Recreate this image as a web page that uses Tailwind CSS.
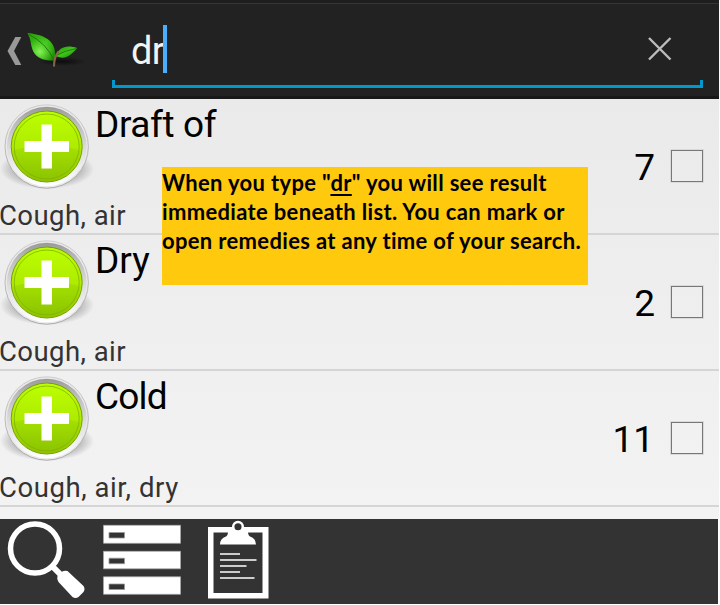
<!DOCTYPE html>
<html lang="en">
<head>
<meta charset="utf-8">
<title>Remedy search</title>
<script src="https://cdn.jsdelivr.net/npm/@tailwindcss/browser@4"></script>
</head>
<body class="bg-white w-[720px] h-[605px] overflow-hidden font-['Roboto',sans-serif]">
<svg class="absolute w-0 h-0">
  <defs>
    <linearGradient id="ring" x1="0" y1="0" x2="0" y2="1"><stop offset="0" stop-color="#999"/><stop offset=".2" stop-color="#bbb"/><stop offset=".55" stop-color="#dedede"/><stop offset="1" stop-color="#fff"/></linearGradient>
    <linearGradient id="rim" x1="0" y1="0" x2="0" y2="1"><stop offset="0" stop-color="#ccc"/><stop offset="1" stop-color="#aaa"/></linearGradient>
    <linearGradient id="lime" x1="0" y1="0" x2="0" y2="1"><stop offset="0" stop-color="#bcff00"/><stop offset=".5" stop-color="#aeec00"/><stop offset="1" stop-color="#8dc400"/></linearGradient>
    <radialGradient id="shade"><stop offset=".7" stop-color="#999" stop-opacity=".6"/><stop offset="1" stop-color="#999" stop-opacity="0"/></radialGradient>
    <linearGradient id="leaf" x1="0" y1="0" x2="1" y2="1"><stop offset="0" stop-color="#279b08"/><stop offset=".5" stop-color="#3fc51a"/><stop offset="1" stop-color="#188000"/></linearGradient>
    <radialGradient id="glow" cx=".45" cy=".68" r=".5"><stop offset="0" stop-color="#8bf25c"/><stop offset="1" stop-color="#55d52c" stop-opacity="0"/></radialGradient>
    <radialGradient id="dark"><stop offset="0" stop-color="#0c0c0c"/><stop offset="1" stop-color="#0c0c0c" stop-opacity="0"/></radialGradient>
  </defs>
  <symbol id="plus" viewBox="0 0 94 94">
    <ellipse cx="47" cy="70" rx="47" ry="20" fill="url(#shade)"/>
    <circle cx="46.700" cy="47.500" r="41.700" fill="#e9e9e9" stroke="url(#rim)" stroke-width="1"/>
    <circle cx="46.700" cy="47.500" r="39.800" fill="url(#ring)"/>
    <circle cx="46.700" cy="47.500" r="35.500" fill="url(#lime)" stroke="#76a000" stroke-width="1"/>
    <circle cx="46.700" cy="47.500" r="32.500" fill="none" stroke="#7fac00" stroke-width="1" opacity=".75"/>
    <path d="M12.500 52c10-4 20-5 34-5s25 1 34 5c-3 18-17 28-34 28s-31-10-34-28z" fill="#86b900" opacity=".22"/>
    <path d="M41.500 25.500h10.500v16.500h17v11h-17v16.500h-10.500v-16.500h-17v-11h17z" fill="#fff"/>
  </symbol>
</svg>

<div class="w-[719px] h-[604px] flex flex-col">
  <header class="h-[99px] bg-[#222] border-b-[3px] border-[#181818] flex flex-col">
    <div class="h-1 shrink-0 bg-[#1e1e1e] border-b border-[#353535]"></div>
    <div class="flex">
      <svg class="w-28 h-[84px]" viewBox="0 4 112 84">
        <path d="M15.300 37h6L14 51l7.300 14h-6L7.500 51z" fill="#999"/>
        <ellipse cx="62" cy="61.500" rx="24" ry="4.500" fill="url(#dark)"/>
        <path d="M27.500 33C39 34 52 38 54.500 49Q56 55 54.500 60.500C48 61 40 60 35 54C30 47 32 41 27.500 33z" fill="url(#leaf)"/>
        <path d="M27.500 33C39 34 52 38 54.500 49Q56 55 54.500 60.500C48 61 40 60 35 54C30 47 32 41 27.500 33z" fill="url(#glow)"/>
        <path d="M56 56C58 48 66 44 77 48C72 54 66 61 56 56z" fill="url(#leaf)"/>
        <path d="M29 34.500Q46 43 54 60M57 55Q64 51 76 48.500" fill="none" stroke="#186b08" stroke-width=".8"/>
        <path d="M54 66.500Q54 57 58.500 51.500" fill="none" stroke="#8b6447" stroke-width="2"/>
      </svg>
      <div class="mt-[19px] w-[591px] h-[65px] flex flex-col">
        <div class="h-[57px] flex justify-between pl-[19px] pr-[31px]">
          <div class="flex"><span class="text-[38px] leading-[56px] text-[#f3f3f3] w-[32px] whitespace-nowrap tracking-[-0.8px]">dr</span><i class="mt-[2px] w-1 h-12 bg-[#4aaefc]"></i></div>
          <svg class="w-6 h-6 mt-[14px]" viewBox="0 0 24 24"><path d="M1 1L22.500 22.500M22.500 1L1 22.500" stroke="#bcbcbc" stroke-width="2.400"/></svg>
        </div>
        <div class="h-2 border-[#0099cc] border-x-[3px] border-b-[3px]"></div>
      </div>
    </div>
  </header>

  <main class="relative h-[420px] bg-linear-to-b from-[#eaeaea] to-[#f3f3f3] overflow-hidden">
    <section class="h-[136px] border-b-2 border-[#d5d5d5] flex justify-between">
      <div>
        <div class="flex h-[94px]"><svg class="w-[94px] h-[94px]"><use href="#plus"/></svg><h2 class="pl-px text-[37px] leading-[52px] tracking-[-0.4px] text-black whitespace-nowrap">Draft of</h2></div>
        <p class="-ml-px text-[27.500px] leading-[46px] tracking-[0.45px] text-[#333] whitespace-nowrap">Cough, air</p>
      </div>
      <div class="flex h-[134px] items-center gap-4 pr-4"><span class="text-[37px] text-black pt-1">7</span><i class="w-8 h-8 border-[1.500px] border-[#777] outline outline-[#dadada]"></i></div>
    </section>
    <section class="h-[136px] border-b-2 border-[#d5d5d5] flex justify-between">
      <div>
        <div class="flex h-[94px]"><svg class="w-[94px] h-[94px]"><use href="#plus"/></svg><h2 class="pl-px text-[37px] leading-[52px] text-black whitespace-nowrap">Dry</h2></div>
        <p class="-ml-px text-[27.500px] leading-[46px] tracking-[0.45px] text-[#333] whitespace-nowrap">Cough, air</p>
      </div>
      <div class="flex h-[134px] items-center gap-4 pr-4"><span class="text-[37px] text-black pt-1">2</span><i class="w-8 h-8 border-[1.500px] border-[#777] outline outline-[#dadada]"></i></div>
    </section>
    <section class="h-[136px] border-b-2 border-[#d5d5d5] flex justify-between">
      <div>
        <div class="flex h-[94px]"><svg class="w-[94px] h-[94px]"><use href="#plus"/></svg><h2 class="pl-px text-[37px] leading-[52px] tracking-[-0.8px] text-black whitespace-nowrap">Cold</h2></div>
        <p class="-ml-px text-[27.500px] leading-[46px] tracking-[0.57px] text-[#333] whitespace-nowrap">Cough, air, dry</p>
      </div>
      <div class="flex h-[134px] items-center gap-[17px] pr-4"><span class="text-[37px] text-black pt-1">11</span><i class="w-8 h-8 border-[1.500px] border-[#777] outline outline-[#dadada]"></i></div>
    </section>
    <aside class="absolute left-[162px] top-[68px] w-[426px] h-[118px] bg-[#ffc90e] pt-px font-['Lato',sans-serif] font-bold text-[22px] leading-[29px] tracking-[0.33px] [font-variant-ligatures:none] text-black whitespace-nowrap">
      <p>When you type "<span class="underline decoration-2 underline-offset-[3px]">dr</span>" you will see result</p>
      <p>immediate beneath list. You can mark or</p>
      <p>open remedies at any time of your search.</p>
    </aside>
  </main>

  <footer class="w-[718px] h-[85px] bg-[#333]">
    <svg class="w-[280px] h-[85px]" viewBox="0 519 280 85">
      <circle cx="35" cy="548.500" r="24.500" fill="none" stroke="#fff" stroke-width="5.500"/>
      <path d="M52 566l9 9" stroke="#fff" stroke-width="6"/>
      <path d="M57.500 576l4-4q3-2 6-1l16 15q2 3 0 6l-5 5q-3 2-6 0l-14-15q-2-3-1-6z" fill="#fff"/>
      <g fill="#fff" stroke="#aaa" stroke-width=".7"><path d="M103.500 525.300h77v18h-77z"/><path d="M103.500 551.300h77v17.500h-77z"/><path d="M103.500 576.800h77v17.500h-77z"/></g>
      <path d="M109 532.500h15.500v5.500H109zM109 558.200h15.500v5.500H109zM109 584h15.500v5.500H109z" fill="#333" stroke="#999" stroke-width=".8"/>
      <path d="M208 527h60.500v71.500H208zM213.500 532.500v60.500h49v-60.500z" fill="#fff" fill-rule="evenodd"/>
      <path d="M220 544.500q0-6 6-8q2-1 2-5h20q0 4 2 5q6 2 6 8z" fill="#fff"/>
      <circle cx="238" cy="526.800" r="4.800" fill="#333" stroke="#fff" stroke-width="2.500"/>
      <path d="M220 554h20M220 560h36.500M220 566h26.500M220 572h20M220 578h34.500" stroke="#ccc" stroke-width="2"/>
    </svg>
  </footer>
</div>
</body>
</html>
